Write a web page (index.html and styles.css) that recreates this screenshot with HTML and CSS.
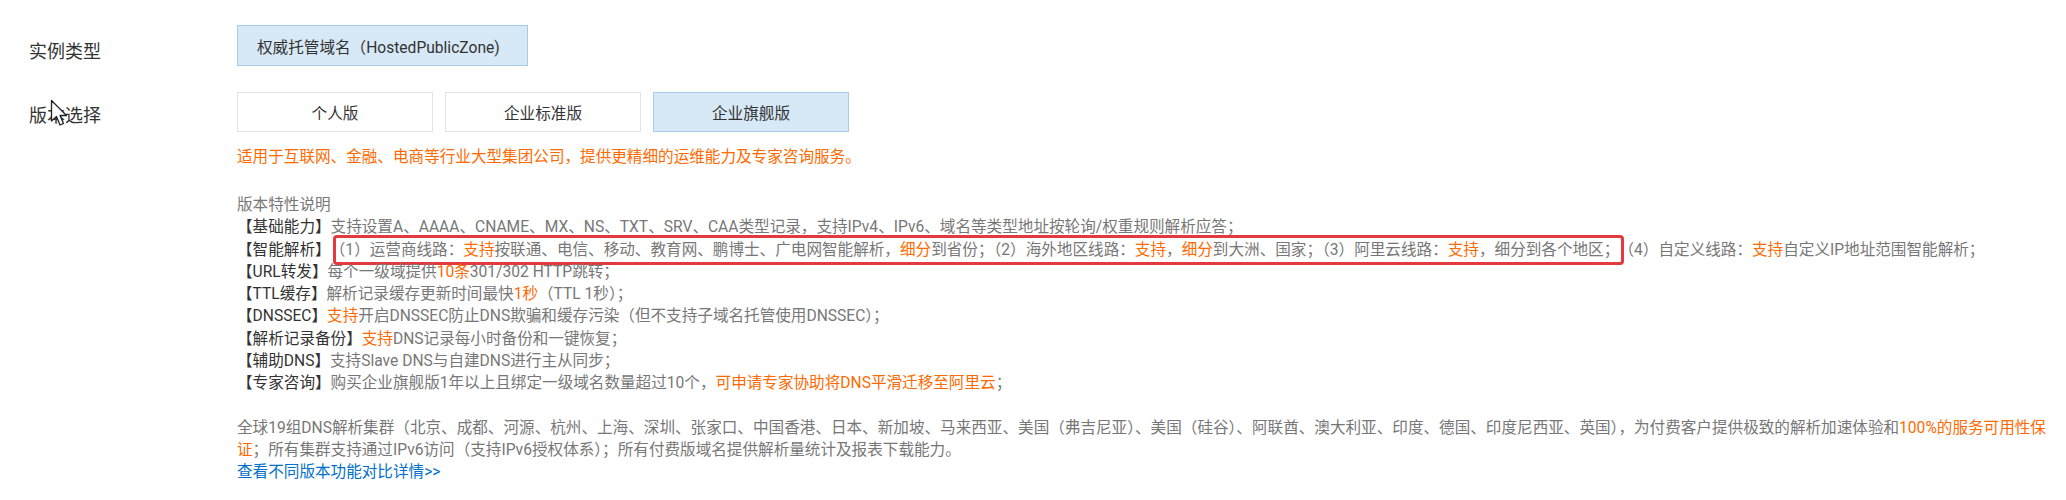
FILE: index.html
```html
<!DOCTYPE html>
<html lang="zh-CN">
<head>
<meta charset="utf-8">
<title>版本选择</title>
<link rel="stylesheet" href="styles.css">
</head>
<body>
<div class="page">
  <div class="row row-type">
    <div class="label">实例类型</div>
    <div class="content">
      <div class="opt opt-wide selected">权威托管域名（HostedPublicZone)</div>
    </div>
  </div>
  <div class="row row-version">
    <div class="label">版本选择</div>
    <div class="content">
      <div class="opts">
        <div class="opt">个人版</div>
        <div class="opt">企业标准版</div>
        <div class="opt selected">企业旗舰版</div>
      </div>
      <p class="tagline">适用于互联网、金融、电商等行业大型集团公司，提供更精细的运维能力及专家咨询服务。</p>
      <div class="features">
        <div class="ftitle">版本特性说明</div>
        <div class="fl"><b>【基础能力】</b>支持设置A、AAAA、CNAME、MX、NS、TXT、SRV、CAA类型记录，支持IPv4、IPv6、域名等类型地址按轮询/权重规则解析应答；</div>
        <div class="fl"><b>【智能解析】</b><span class="mark">（1）运营商线路：<em>支持</em>按联通、电信、移动、教育网、鹏博士、广电网智能解析，<em>细分</em>到省份；（2）海外地区线路：<em>支持</em>，<em>细分</em>到大洲、国家；（3）阿里云线路：<em>支持</em>，细分到各个地区；</span>（4）自定义线路：<em>支持</em>自定义IP地址范围智能解析；</div>
        <div class="fl"><b>【URL转发】</b>每个一级域提供<em>10条</em>301/302 HTTP跳转；</div>
        <div class="fl"><b>【TTL缓存】</b>解析记录缓存更新时间最快<em>1秒</em>（TTL 1秒）；</div>
        <div class="fl"><b>【DNSSEC】</b><em>支持</em>开启DNSSEC防止DNS欺骗和缓存污染（但不支持子域名托管使用DNSSEC）；</div>
        <div class="fl"><b>【解析记录备份】</b><em>支持</em>DNS记录每小时备份和一键恢复；</div>
        <div class="fl"><b>【辅助DNS】</b>支持Slave DNS与自建DNS进行主从同步；</div>
        <div class="fl"><b>【专家咨询】</b>购买企业旗舰版1年以上且绑定一级域名数量超过10个，<em>可申请专家协助将DNS平滑迁移至阿里云</em>；</div>
      </div>
      <p class="global">全球19组DNS解析集群（北京、成都、河源、杭州、上海、深圳、张家口、中国香港、日本、新加坡、马来西亚、美国（弗吉尼亚）、美国（硅谷）、阿联酋、澳大利亚、印度、德国、印度尼西亚、英国），为付费客户提供极致的解析加速体验和<em>100%的服务可用性保证</em>；所有集群支持通过IPv6访问（支持IPv6授权体系）；所有付费版域名提供解析量统计及报表下载能力。</p>
      <a class="more" href="#">查看不同版本功能对比详情&gt;&gt;</a>
    </div>
  </div>
</div>
<svg class="cursor" width="20" height="30" viewBox="0 0 20 30" xmlns="http://www.w3.org/2000/svg">
  <path d="M1.5 1.5 L1.5 22 L6.5 17.5 L10 26 L13.5 24.5 L10 16.5 L16.5 16.5 Z" fill="#fff" stroke="#222" stroke-width="1.3" stroke-linejoin="round"/>
</svg>
</body>
</html>
```

FILE: styles.css
```css
html, body {
  margin: 0;
  padding: 0;
  background: #fff;
}
body {
  font-family: Roboto, "Noto Sans CJK SC", sans-serif;
  color: #666;
  position: relative;
}
.page {
  padding: 25px 16px 0 29px;
}
.row {
  display: flex;
  align-items: flex-start;
}
.label {
  width: 208px;
  flex: none;
  font-size: 18px;
  color: #333;
  line-height: 24px;
}
.row-type .label { padding-top: 15px; }
.row-version { margin-top: 26px; }
.row-version .label { padding-top: 12px; }
.content {
  flex: 1;
  min-width: 0;
}
.opts {
  display: flex;
  gap: 12px;
}
.opt {
  box-sizing: border-box;
  width: 196px;
  height: 40px;
  border: 1px solid #e3e3e3;
  background: #fff;
  color: #333;
  font-size: 15.6px;
  display: flex;
  align-items: center;
  justify-content: center;
}
.opt-wide {
  width: 291px;
  height: 41px;
  justify-content: flex-start;
  padding-left: 19px;
}
.opt.selected {
  background: #d7e8f6;
  border-color: #a8cbe8;
}
.tagline {
  margin: 0;
  padding-top: 14px;
  color: #ff6a00;
  font-size: 15.6px;
  line-height: 22px;
}
.features {
  margin-top: 26px;
  font-size: 15.6px;
  line-height: 22.3px;
}
.ftitle { color: #777; }
.fl { color: #777; white-space: nowrap; }
.fl b { font-weight: normal; color: #333; }
em { font-style: normal; color: #ff6a00; }
.mark {
  border: 3px solid #e23a3f;
  border-radius: 4px;
  padding: 3px 2px;
  margin: 0 2px 0 2px;
}
.global {
  margin: 22px 0 0 0;
  font-size: 15.6px;
  line-height: 22.2px;
  color: #777;
}
.more {
  display: block;
  font-size: 15.6px;
  line-height: 22.2px;
  color: #0070cc;
  text-decoration: none;
}
.cursor {
  position: absolute;
  left: 50px;
  top: 99px;
}
```
